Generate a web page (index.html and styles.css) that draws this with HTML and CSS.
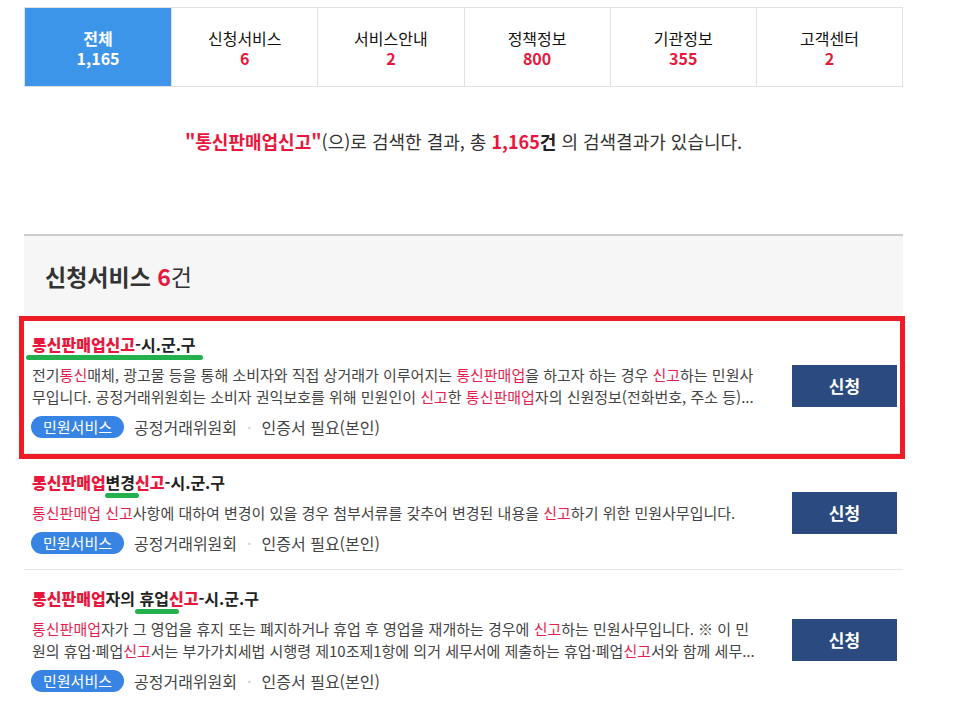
FILE: index.html
```html
<!DOCTYPE html>
<html lang="ko">
<head>
    <meta charset="UTF-8">
    <meta name="viewport" content="width=device-width, initial-scale=1.0">
    <title>통합검색</title>
    <link rel="stylesheet" href="styles.css">
</head>
<body>
    <div class="wrap">
        <ul class="tabs">
            <li class="tab on"><span class="tab-name">전체</span><span class="tab-count">1,165</span></li>
            <li class="tab"><span class="tab-name">신청서비스</span><span class="tab-count">6</span></li>
            <li class="tab"><span class="tab-name">서비스안내</span><span class="tab-count">2</span></li>
            <li class="tab"><span class="tab-name">정책정보</span><span class="tab-count">800</span></li>
            <li class="tab"><span class="tab-name">기관정보</span><span class="tab-count">355</span></li>
            <li class="tab"><span class="tab-name">고객센터</span><span class="tab-count">2</span></li>
        </ul>

        <p class="summary">
            <strong class="hl">"통신판매업신고"</strong>(으)로 검색한 결과, 총 <strong class="hl">1,165</strong><strong>건</strong> 의 검색결과가 있습니다.
        </p>

        <div class="section">
            <h3 class="section-title">신청서비스 <em>6</em><span>건</span></h3>

            <ul class="results">
                <li class="result picked">
                    <div class="info">
                        <a class="title" href="#"><span class="mark"><b>통신판매업신고</b>-시.군.구</span></a>
                        <p class="desc">전기<b>통신</b>매체, 광고물 등을 통해 소비자와 직접 상거래가 이루어지는 <b>통신판매업</b>을 하고자 하는 경우 <b>신고</b>하는 민원사무입니다. 공정거래위원회는 소비자 권익보호를 위해 민원인이 <b>신고</b>한 <b>통신판매업</b>자의 신원정보(전화번호, 주소 등)...</p>
                        <div class="meta">
                            <span class="badge">민원서비스</span>
                            <span class="org">공정거래위원회</span>
                            <span class="dot">·</span>
                            <span>인증서 필요(본인)</span>
                        </div>
                    </div>
                    <button class="btn-apply" type="button">신청</button>
                </li>
                <li class="result">
                    <div class="info">
                        <a class="title" href="#"><b>통신판매업</b><span class="mark short">변경</span><b>신고</b>-시.군.구</a>
                        <p class="desc"><b>통신판매업 신고</b>사항에 대하여 변경이 있을 경우 첨부서류를 갖추어 변경된 내용을 <b>신고</b>하기 위한 민원사무입니다.</p>
                        <div class="meta">
                            <span class="badge">민원서비스</span>
                            <span class="org">공정거래위원회</span>
                            <span class="dot">·</span>
                            <span>인증서 필요(본인)</span>
                        </div>
                    </div>
                    <button class="btn-apply" type="button">신청</button>
                </li>
                <li class="result">
                    <div class="info">
                        <a class="title" href="#"><b>통신판매업</b>자의<span class="mark wide"> 휴업</span><b>신고</b>-시.군.구</a>
                        <p class="desc"><b>통신판매업</b>자가 그 영업을 휴지 또는 폐지하거나 휴업 후 영업을 재개하는 경우에 <b>신고</b>하는 민원사무입니다. ※ 이 민원의 휴업·폐업<b>신고</b>서는 부가가치세법 시행령 제10조제1항에 의거 세무서에 제출하는 휴업·폐업<b>신고</b>서와 함께 세무...</p>
                        <div class="meta">
                            <span class="badge">민원서비스</span>
                            <span class="org">공정거래위원회</span>
                            <span class="dot">·</span>
                            <span>인증서 필요(본인)</span>
                        </div>
                    </div>
                    <button class="btn-apply" type="button">신청</button>
                </li>
            </ul>
        </div>
    </div>
</body>
</html>
```

FILE: styles.css
```css
body {
    margin: 0;
    font-family: "Malgun Gothic", "Noto Sans CJK KR", sans-serif;
    color: #333;
    background: #fff;
}
.wrap {
    width: 879px;
    margin-left: 24px;
    padding-top: 7px;
}
ul {
    list-style: none;
    margin: 0;
    padding: 0;
}
.tabs {
    display: grid;
    grid-template-columns: repeat(6, 1fr);
    border: 1px solid #e1e1e1;
    height: 78px;
}
.tab {
    display: flex;
    flex-direction: column;
    align-items: center;
    justify-content: center;
    padding-top: 2px;
    border-left: 1px solid #e1e1e1;
    font-size: 16px;
    line-height: 20px;
    color: #111;
}
.tab:first-child {
    border-left: none;
}
.tab-count {
    color: #e8173d;
    font-weight: bold;
}
.tab.on {
    background: #3d95ea;
    color: #fff;
    font-weight: bold;
}
.tab.on .tab-count {
    color: #fff;
}
.summary {
    margin: 42px 0 0;
    text-align: center;
    font-size: 18px;
    line-height: 24px;
    color: #333;
}
.summary strong {
    color: #222;
}
.summary .hl {
    color: #e8173d;
}
.section {
    margin-top: 81px;
    border-top: 2px solid #cccccc;
}
.section-title {
    margin: 0;
    padding: 25px 21px 25px;
    background: #f6f6f6;
    font-size: 23px;
    line-height: 30px;
    font-weight: bold;
    color: #333;
}
.section-title em {
    font-style: normal;
    color: #e8173d;
}
.section-title span {
    font-weight: normal;
}
.result {
    position: relative;
    display: flex;
    align-items: center;
    padding: 17px 6px 15px 8px;
    border-bottom: 1px solid #e5e5e5;
}
.info {
    flex: 1;
    min-width: 0;
}
.title {
    display: block;
    font-size: 16px;
    line-height: 22px;
    font-weight: bold;
    color: #222;
    text-decoration: none;
}
.title b {
    color: #e8173d;
}
.desc b {
    font-weight: normal;
    color: #e41e4f;
}
.desc {
    width: 723px;
    margin: 9px 0 0;
    font-size: 15px;
    line-height: 22px;
    color: #444;
}
.meta {
    display: flex;
    align-items: center;
    margin-top: 8px;
    font-size: 16px;
    line-height: 22px;
    color: #444;
}
.badge {
    padding: 0 12px;
    margin-left: -1px;
    margin-right: 10px;
    border-radius: 11px;
    background: #3884e4;
    color: #fff;
    font-size: 15px;
}
.dot {
    margin: 0 10px;
    color: #ccc;
}
.btn-apply {
    width: 105px;
    height: 42px;
    border: none;
    background: #2b4b80;
    color: #fff;
    font-family: inherit;
    font-size: 17px;
    font-weight: bold;
    cursor: pointer;
}

/* review marks */
.result.picked::after {
    content: "";
    position: absolute;
    top: 0;
    left: -5px;
    right: -2px;
    bottom: -6px;
    border: 5px solid #ee1c25;
    pointer-events: none;
}
.mark {
    position: relative;
}
.mark::after {
    content: "";
    position: absolute;
    left: -6px;
    right: -7px;
    top: calc(100% - 1px);
    height: 5px;
    border-radius: 3px;
    background: #22b14c;
}
.mark.short::after {
    left: -1px;
    right: -4px;
}
.mark.wide::after {
    left: 0;
    right: -10px;
}
```
